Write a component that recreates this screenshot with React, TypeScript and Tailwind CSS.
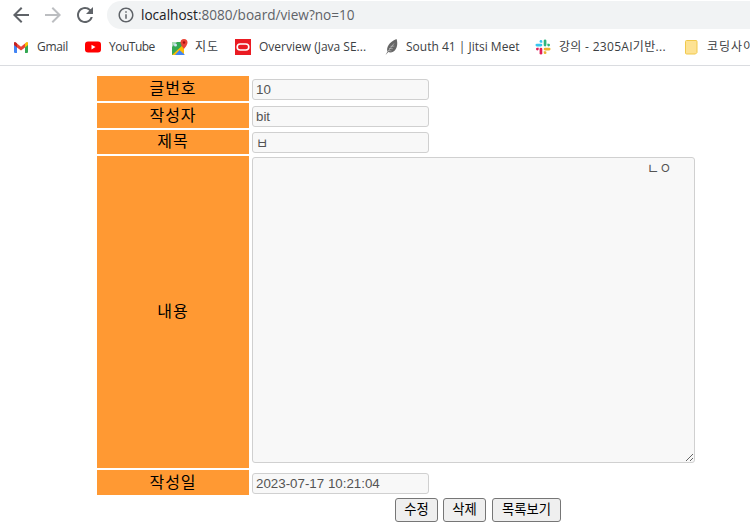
import React from 'react'

const UI_FONT = "font-['Open_Sans','Noto_Sans_CJK_KR',sans-serif]"
const PAGE_FONT = "font-['Liberation_Sans','Noto_Sans_CJK_KR',sans-serif]"

function GmailIcon(): React.JSX.Element {
  return (
    <svg width="16" height="16" viewBox="0 0 16 16">
      <path d="M1 5h3v9H2a1 1 0 0 1-1-1z" fill="#4285f4" />
      <path d="M12 5h3v8a1 1 0 0 1-1 1h-2z" fill="#34a853" />
      <path d="M4 4.500 8 7.800l4-3.300v4L8 11.500l-4-3z" fill="#ea4335" />
      <path d="M12 4.200 13.400 3.200C14 2.800 15 3.200 15 4v2l-3 2.500z" fill="#fbbc04" />
      <path d="M1 4c0-.8 1-1.200 1.600-.8L4 4.200v4.300L1 6z" fill="#c5221f" />
    </svg>
  )
}

function YoutubeIcon(): React.JSX.Element {
  return (
    <svg width="16" height="16" viewBox="0 0 16 16">
      <rect x="0" y="2.500" width="16" height="11" rx="3" fill="#ff0000" />
      <path d="M6.500 5.700v4.800l4-2.400z" fill="#ffffff" />
    </svg>
  )
}

function MapsIcon(): React.JSX.Element {
  return (
    <svg width="16" height="16" viewBox="0 0 16 16">
      <path d="M0 3h12v13H0z" fill="#34a853" />
      <path d="M0 16 12 5v11z" fill="#fbbc04" />
      <path d="M3 16l4.500-5 5.500 5z" fill="#4285f4" />
      <path d="M0 3h5L0 8z" fill="#a8dab5" />
      <circle cx="3.500" cy="6" r="1.500" fill="#d2e3fc" />
      <path d="M12 0a3.500 3.500 0 0 0-3.500 3.500C8.500 6 12 10 12 10s3.500-4 3.500-6.500A3.500 3.500 0 0 0 12 0z" fill="#ea4335" />
      <circle cx="12" cy="3.500" r="1.200" fill="#a50e0e" />
    </svg>
  )
}

function OracleIcon(): React.JSX.Element {
  return (
    <svg width="16" height="16" viewBox="0 0 16 16">
      <rect x="0" y="0" width="16" height="16" fill="#ea1b22" />
      <rect x="2.200" y="5" width="11.600" height="6" rx="3" fill="none" stroke="#ffffff" strokeWidth="1.600" />
    </svg>
  )
}

function JitsiIcon(): React.JSX.Element {
  return (
    <svg width="16" height="16" viewBox="0 0 16 16">
      <path d="M0.500 16 2.500 12.500C1 9 4 3 11.500 0c1.500 4 1 10-3 12.500-2 1.200-4 1-5.200.5z" fill="#666666" />
      <path d="M2.500 13 9 4.500M4 9.500l3.800.2M5.500 7.300l3.800-.2M3.500 11.500l3 .5" stroke="#d8d8d8" strokeWidth="0.500" fill="none" />
    </svg>
  )
}

function SlackIcon(): React.JSX.Element {
  return (
    <svg width="16" height="16" viewBox="0 0 16 16">
      <rect x="0.500" y="4.700" width="6.800" height="2.700" rx="1.350" fill="#36c5f0" />
      <path d="M4.600 2.400a1.350 1.350 0 0 1 2.700 0v1.400H6a1.400 1.400 0 0 1-1.400-1.400z" fill="#36c5f0" />
      <rect x="8.700" y="0.500" width="2.700" height="6.900" rx="1.350" fill="#2eb67d" />
      <path d="M12.300 4.700h1.300a1.350 1.350 0 1 1-1.300 1.350z" fill="#2eb67d" />
      <rect x="8.700" y="8.700" width="6.800" height="2.700" rx="1.350" fill="#ecb22e" />
      <path d="M8.700 12.300H10a1.400 1.400 0 1 1-1.300 1.400z" fill="#ecb22e" />
      <rect x="4.600" y="8.700" width="2.700" height="6.800" rx="1.350" fill="#e01e5a" />
      <path d="M3.700 8.700v1.300a1.350 1.350 0 1 1-1.350-1.300z" fill="#e01e5a" />
    </svg>
  )
}

function NoteIcon(): React.JSX.Element {
  return (
    <svg width="16" height="16" viewBox="0 0 16 16">
      <path d="M1.500 1.500h9.500a1 1 0 0 1 1 1v11l-1.500 1.500H1.500a1 1 0 0 1-1-1v-11.500a1 1 0 0 1 1-1z" fill="#fde293" stroke="#f1c94b" />
    </svg>
  )
}

const BOOKMARKS: { label: string; icon: React.JSX.Element; width: string; text: string }[] = [
  { label: 'Gmail', icon: <GmailIcon />, width: 'w-[72px]', text: 'ml-[8px] tracking-[-0.3px]' },
  { label: 'YouTube', icon: <YoutubeIcon />, width: 'w-[87px]', text: 'ml-[8px] tracking-[-0.5px]' },
  { label: '지도', icon: <MapsIcon />, width: 'w-[63px]', text: 'ml-[7px] tracking-[1px]' },
  { label: 'Overview (Java SE...', icon: <OracleIcon />, width: 'w-[150px]', text: 'ml-[8px]' },
  { label: 'South 41 | Jitsi Meet', icon: <JitsiIcon />, width: 'w-[150px]', text: 'ml-[5px]' },
  { label: '강의 - 2305AI기반...', icon: <SlackIcon />, width: 'w-[150px]', text: 'ml-[8px] tracking-[0.3px]' },
  { label: '코딩사이트', icon: <NoteIcon />, width: 'w-[100px]', text: 'ml-[6px] tracking-[1px]' }
]

function Label({ children }: { children: React.ReactNode }): React.JSX.Element {
  return (
    <div className="flex items-center justify-center bg-[#ff9933] text-base leading-none tracking-[1px] text-black">
      {children}
    </div>
  )
}

function Field({ value, top = 'mt-[3px]' }: { value: string; top?: string }): React.JSX.Element {
  return (
    <div className="pl-px">
      <input
        readOnly
        value={value}
        className={`${top} block h-[21px] w-[177px] rounded-[3px] border border-[#d0d0d0] bg-[#f8f8f8] px-[3px] text-[13.330px] text-[#545454] outline-none`}
      />
    </div>
  )
}

export default function App(): React.JSX.Element {
  return (
    <div className={`h-[528px] w-[750px] overflow-hidden bg-white ${PAGE_FONT}`}>
      <div className={`${UI_FONT} border-b border-[#dadce0]`}>
        <div className="flex h-[30px] items-center pl-[9px]">
          <svg width="24" height="24" viewBox="0 0 24 24" fill="#5f6368">
            <path d="M20 11H7.830l5.590-5.590L12 4l-8 8 8 8 1.410-1.410L7.830 13H20v-2z" />
          </svg>
          <svg className="ml-2" width="24" height="24" viewBox="0 0 24 24" fill="#bcbec1">
            <path d="M12 4l-1.410 1.410L16.170 11H4v2h12.170l-5.580 5.590L12 20l8-8z" />
          </svg>
          <svg className="ml-2" width="24" height="24" viewBox="0 0 24 24" fill="#5f6368">
            <path d="M17.650 6.350A7.958 7.958 0 0 0 12 4c-4.420 0-7.990 3.580-7.990 8s3.570 8 7.990 8c3.730 0 6.840-2.550 7.730-6h-2.080A5.990 5.990 0 0 1 12 18c-3.310 0-6-2.690-6-6s2.690-6 6-6c1.660 0 3.140.690 4.220 1.780L13 11h7V4l-2.350 2.350z" />
          </svg>
          <div className="ml-[10px] flex h-[28px] flex-1 items-center rounded-l-full bg-[#f1f3f4] pl-[10px]">
            <svg width="18" height="18" viewBox="0 0 24 24" fill="#5f6368">
              <path d="M11 7h2v2h-2zm0 4h2v6h-2zm1-9C6.480 2 2 6.480 2 12s4.480 10 10 10 10-4.480 10-10S17.520 2 12 2zm0 18c-4.410 0-8-3.590-8-8s3.590-8 8-8 8 3.590 8 8-3.590 8-8 8z" />
            </svg>
            <span className="ml-[6px] text-[13.600px] leading-none text-[#5f6368]">
              <span className="text-[#202124]">localhost</span>:8080/board/view?no=10
            </span>
          </div>
        </div>
        <div className="flex h-[35px] items-center overflow-hidden pb-[2px] pl-[13px]">
          {BOOKMARKS.map(({ label, icon, width, text }) => (
            <div key={label} className={`flex shrink-0 items-center ${width}`}>
              <span className="w-4 shrink-0">{icon}</span>
              <span className={`whitespace-nowrap text-[12px] leading-none text-[#3c4043] ${text}`}>{label}</span>
            </div>
          ))}
        </div>
      </div>

      <div className="ml-[97px] mt-[10px] grid w-[600px] grid-cols-[152px_1fr] grid-rows-[25px_25px_24px_312px_25px] gap-[2px]">
        <Label>글번호</Label>
        <Field value="10" />
        <Label>작성자</Label>
        <Field value="bit" />
        <Label>제목</Label>
        <Field value="ㅂ" top="mt-[2px]" />
        <Label>내용</Label>
        <div className="pl-px">
          <textarea
            readOnly
            value={`${' '.repeat(49)}ㄴㅇ`}
            className="mt-px block h-[306px] w-[443px] rounded-[3px] border border-[#d0d0d0] bg-[#f8f8f8] p-[2px] font-['Liberation_Mono','Noto_Sans_CJK_KR',monospace] text-[13.330px] text-[#545454] outline-none"
          />
        </div>
        <Label>작성일</Label>
        <Field value="2023-07-17 10:21:04" />
      </div>

      <div className="ml-[395px] mt-[3px] flex gap-[5px]">
        <button className="h-[24px] w-[43px] rounded-[3px] border border-[#767676] bg-[#efefef] text-[13.330px] leading-none text-black">
          수정
        </button>
        <button className="h-[24px] w-[43px] rounded-[3px] border border-[#767676] bg-[#efefef] text-[13.330px] leading-none text-black">
          삭제
        </button>
        <button className="ml-px h-[24px] w-[69px] rounded-[3px] border border-[#767676] bg-[#efefef] text-[13.330px] leading-none text-black">
          목록보기
        </button>
      </div>
    </div>
  )
}
